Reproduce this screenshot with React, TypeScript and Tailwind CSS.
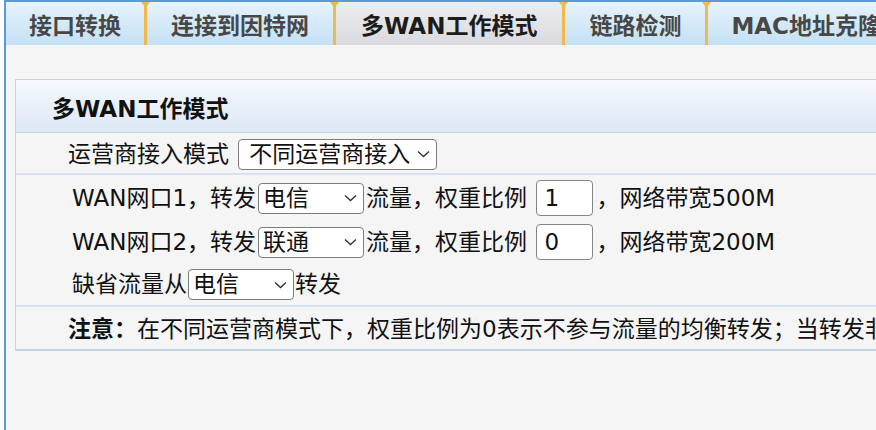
import React from 'react';

const tabs = [
    { label: '接口转换', active: false, pad: 'px-[23px]' },
    { label: '连接到因特网', active: false, pad: 'px-[24px]' },
    { label: '多WAN工作模式', active: true, pad: 'px-[25px]' },
    { label: '链路检测', active: false, pad: 'px-[24px]' },
    { label: 'MAC地址克隆', active: false, pad: 'px-[23px]' },
];

function Divider() {
    return (
        <svg width="9" height="43" viewBox="0 0 9 43" className="relative z-10 -mx-[3px] shrink-0">
            <rect x="3" y="0" width="3" height="43" fill="#f1b84a" />
            <path d="M0 0 L9 0 L4.5 6 Z" fill="#f1b84a" />
        </svg>
    );
}

function Chevron() {
    return (
        <svg width="13" height="8" viewBox="0 0 13 8" className="pointer-events-none absolute right-[7px] top-1/2 -translate-y-1/2">
            <path d="M1 1.5 L6.5 6.5 L12 1.5" fill="none" stroke="#333" strokeWidth="1.4" />
        </svg>
    );
}

function Dropdown({
    className,
    selectClass,
    options,
}: {
    className: string;
    selectClass: string;
    options: string[];
}) {
    return (
        <span className={`relative inline-flex shrink-0 ${className}`}>
            <select
                defaultValue={options[0]}
                className={`h-[31px] w-full appearance-none rounded-[4px] border border-[#7c7c7c] bg-white leading-none text-[#111] outline-none ${selectClass}`}
            >
                {options.map((o) => (
                    <option key={o} value={o}>
                        {o}
                    </option>
                ))}
            </select>
            <Chevron />
        </span>
    );
}

function Weight({ value }: { value: string }) {
    return (
        <input
            type="text"
            defaultValue={value}
            className="ml-[2px] mr-[3px] h-[36px] w-[57px] shrink-0 rounded-[4px] border border-[#858585] bg-white pl-[7px] text-[#111] outline-none"
        />
    );
}

export default function App() {
    return (
        <div className="h-[430px] w-[876px] overflow-hidden bg-white pl-[4px] font-['DejaVu_Sans','Noto_Sans_CJK_SC',sans-serif] text-[23px] text-[#111]">
            <div className="flex h-full flex-col border-l-2 border-t-2 border-[#5b9ad8] bg-[#f5f5f6]">
                {/* tab bar */}
                <nav className="flex h-[43px] shrink-0 whitespace-nowrap">
                    {tabs.map((t, i) => (
                        <React.Fragment key={t.label}>
                            {i > 0 && <Divider />}
                            <div
                                className={`flex shrink-0 items-center pt-[5px] font-bold ${t.pad} ${
                                    t.active
                                        ? 'bg-linear-to-b from-[#ededef] to-[#d9dadd] text-[#1c1c1c]'
                                        : 'bg-linear-to-b from-[#e6f3fc] to-[#c4e0f3] text-[#474747]'
                                }`}
                            >
                                {t.label}
                            </div>
                        </React.Fragment>
                    ))}
                </nav>

                {/* panel */}
                <section className="ml-[9px] mt-[34px] w-[900px] shrink-0 border border-b-2 border-[#c9d4e2] border-b-[#c4d2e6]">
                    <h2 className="flex h-[53px] items-center border-b border-[#c9d6e6] bg-linear-to-b from-[#f6f9fd] to-[#dce7f5] pl-[36px] pt-[7px] font-bold">
                        多WAN工作模式
                    </h2>
                    <div className="flex h-[42px] items-center whitespace-nowrap border-b-2 border-[#d8e1ee] pl-[52px] pt-[2px]">
                        运营商接入模式&nbsp;
                        <Dropdown
                            className="ml-[2px] w-[199px]"
                            selectClass="pl-[10px]"
                            options={['不同运营商接入', '相同运营商接入']}
                        />
                    </div>
                    <div className="flex flex-col whitespace-nowrap border-b-2 border-[#d8e1ee] pl-[56px] pt-[1px]">
                        <div className="flex h-[44px] items-center">
                            WAN网口1，转发
                            <Dropdown className="mx-[2px] w-[106px]" selectClass="pl-[4px]" options={['电信', '联通', '移动']} />
                            流量，权重比例&nbsp;
                            <Weight value="1" />
                            ，网络带宽500M
                        </div>
                        <div className="flex h-[44px] items-center">
                            WAN网口2，转发
                            <Dropdown className="mx-[2px] w-[106px]" selectClass="pl-[4px]" options={['联通', '电信', '移动']} />
                            流量，权重比例&nbsp;
                            <Weight value="0" />
                            ，网络带宽200M
                        </div>
                        <div className="flex h-[41px] items-center">
                            缺省流量从
                            <Dropdown className="mx-[1px] w-[106px]" selectClass="pl-[4px]" options={['电信', '联通', '移动']} />
                            转发
                        </div>
                    </div>
                    <div className="flex h-[42px] items-center whitespace-nowrap pl-[52px] pt-[2px]">
                        <b className="font-bold">注意：</b>
                        在不同运营商模式下，权重比例为0表示不参与流量的均衡转发；当转发非对应运营商的流量时，按缺省流量转发
                    </div>
                </section>
            </div>
        </div>
    );
}
